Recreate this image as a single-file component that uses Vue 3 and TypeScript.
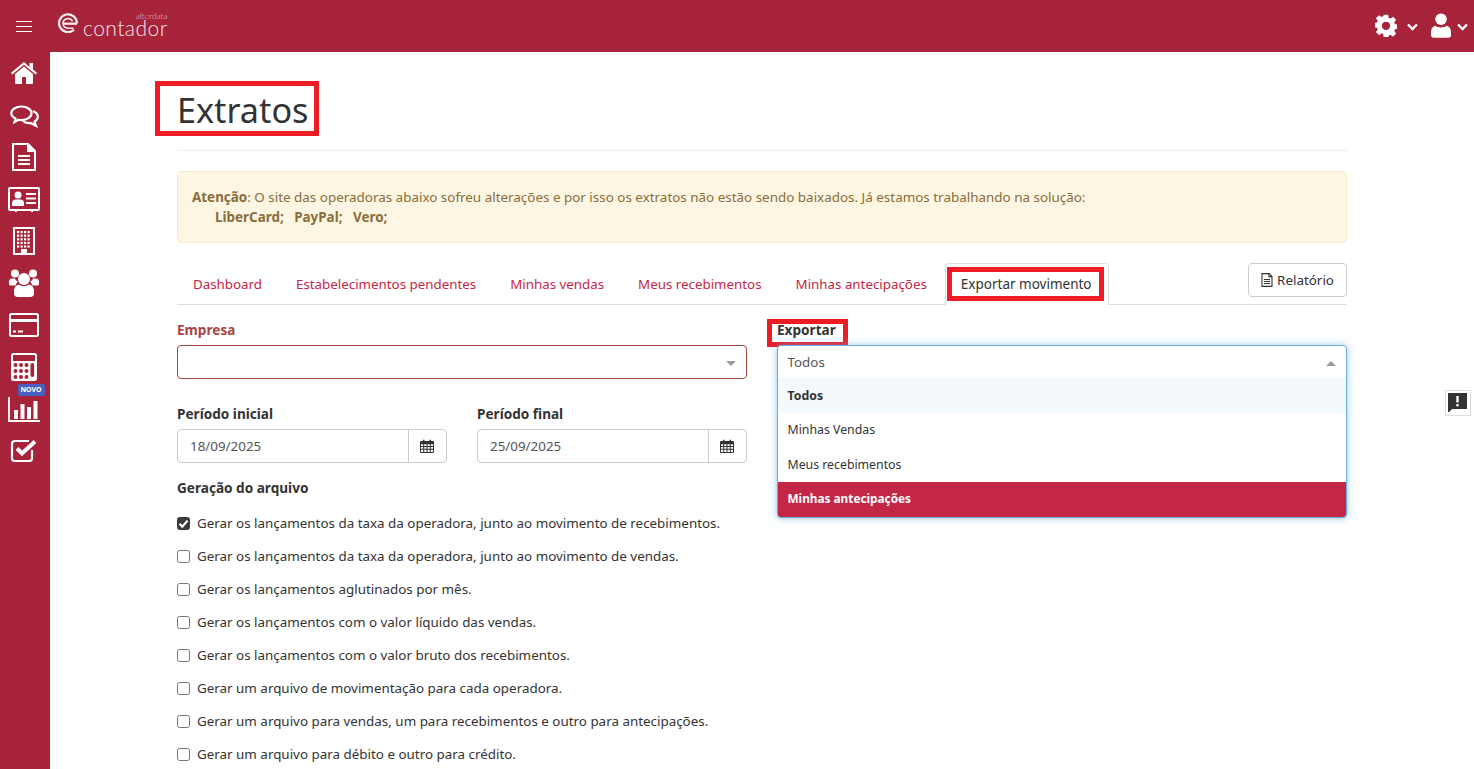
<script setup lang="ts">
const tabs: string[] = ['Dashboard', 'Estabelecimentos pendentes', 'Minhas vendas', 'Meus recebimentos', 'Minhas antecipações']
const options: { text: string; cls: string }[] = [
  { text: 'Todos', cls: 'hover' },
  { text: 'Minhas Vendas', cls: '' },
  { text: 'Meus recebimentos', cls: '' },
  { text: 'Minhas antecipações', cls: 'selected' },
]
const checks: { text: string; on: boolean }[] = [
  { text: 'Gerar os lançamentos da taxa da operadora, junto ao movimento de recebimentos.', on: true },
  { text: 'Gerar os lançamentos da taxa da operadora, junto ao movimento de vendas.', on: false },
  { text: 'Gerar os lançamentos aglutinados por mês.', on: false },
  { text: 'Gerar os lançamentos com o valor líquido das vendas.', on: false },
  { text: 'Gerar os lançamentos com o valor bruto dos recebimentos.', on: false },
  { text: 'Gerar um arquivo de movimentação para cada operadora.', on: false },
  { text: 'Gerar um arquivo para vendas, um para recebimentos e outro para antecipações.', on: false },
  { text: 'Gerar um arquivo para débito e outro para crédito.', on: false },
]
const dates: { label: string; value: string }[] = [
  { label: 'Período inicial', value: '18/09/2025' },
  { label: 'Período final', value: '25/09/2025' },
]
</script>

<template>
  <div class="app">
    <header class="topbar">
      <div class="burger"><i></i><i></i><i></i></div>
      <div class="logo">
        <svg width="20" height="20" viewBox="0 0 20 20" fill="none" stroke="#fbeef0" stroke-width="2.200">
          <path d="M18.900 10.500A8.900 8.900 0 1 0 16 16.800" />
          <path d="M5 10.700h13.900" />
          <path d="M5 10.700a5 5 0 0 1 9.500-2.200" stroke-width="1.600" />
          <path d="M5 10.700a5 5 0 0 0 5 4.500h5.500" stroke-width="1.600" />
        </svg>
        <span class="logo-word">contador<small>alterdata</small></span>
      </div>
      <div class="top-actions">
        <svg class="gear" width="22" height="23" viewBox="0 0 24 24" fill="#fff">
          <path fill-rule="evenodd" d="M9.600 0h4.800l.6 3.400 1.800.7 2.800-2 3.400 3.400-2 2.800.8 1.800 3.200.6v4.600l-3.200.6-.8 1.800 2 2.800-3.400 3.400-2.800-2-1.800.7-.6 3.400H9.600L9 20.900l-1.800-.7-2.800 2L1 18.800l2-2.800-.8-1.800L-1 13.600V9l3.200-.6.8-1.800-2-2.800 3.400-3.400 2.800 2L9 1.700zM12 7.500a4.500 4.500 0 1 0 0 9 4.500 4.500 0 0 0 0-9z" transform="translate(0 .3)" />
        </svg>
        <svg class="chev" width="11" height="8" viewBox="0 0 11 8" fill="none" stroke="#fff" stroke-width="2.400"><path d="M1 1.500l4.500 4.500L10 1.500" /></svg>
        <svg class="user" width="20" height="25" viewBox="0 0 20 25" fill="#fff">
          <circle cx="10" cy="6.200" r="5.800" /><path d="M4 12.800c1.800 1.200 3.800 1.700 6 1.700s4.200-.5 6-1.700c2.500.8 4 3.200 4 6.200v3.300c0 1.500-1 2.500-2.500 2.500h-15C1 24.800 0 23.800 0 22.300V19c0-3 1.500-5.400 4-6.200z" />
        </svg>
        <svg class="chev last" width="11" height="8" viewBox="0 0 11 8" fill="none" stroke="#fff" stroke-width="2.400"><path d="M1 1.500l4.500 4.500L10 1.500" /></svg>
      </div>
    </header>

    <div class="body">
      <aside class="sidebar">
        <svg width="26" height="22" viewBox="0 0 26 22" fill="#fff">
          <path d="M13 4.500L4 12v9a1 1 0 0 0 1 1h6v-7h4v7h6a1 1 0 0 0 1-1v-9z" /><path d="M13 0L0 10.800l1.300 1.600L13 2.700l11.700 9.700 1.300-1.600-4-3.300V1h-3.500v3.900z" />
        </svg>
        <svg width="29" height="23" viewBox="0 0 29 23" fill="none" stroke="#fff" stroke-width="2.200">
          <path d="M11.500 1.500c5.500 0 10 3 10 6.800s-4.500 6.800-10 6.800c-1 0-1.800 0-2.800-.3L4.500 17l1-3.500C3 12.300 1.300 10.500 1.300 8.300c0-3.800 4.600-6.800 10.200-6.800z" />
          <path d="M23 6c3 1.200 4.800 3.500 4.800 5.800 0 2-1.400 3.800-3.300 5l1.500 4-5.500-2.800c-3 .3-5.500-.5-7.500-2" />
        </svg>
        <svg width="24" height="28" viewBox="0 0 24 28" fill="none" stroke="#fff" stroke-width="2">
          <path d="M1 1h15l7 7v19H1z" /><path d="M16 1v7h7" fill="#fff" /><path d="M6 13h12M6 17h12M6 21h12" />
        </svg>
        <svg width="32" height="25" viewBox="0 0 32 25">
          <rect x="1" y="1" width="30" height="22" fill="none" stroke="#fff" stroke-width="2" rx="1" />
          <circle cx="10" cy="8" r="3.500" fill="#fff" /><path d="M4 19v-3c0-2.500 2-3.500 3.500-3.500h5c1.500 0 3.500 1 3.500 3.500v3z" fill="#fff" />
          <path d="M18 7h10M18 11.500h10M18 16h10" stroke="#fff" stroke-width="2" />
          <path d="M8 23v2M24 23v2" stroke="#fff" stroke-width="2" />
        </svg>
        <svg width="22" height="28" viewBox="0 0 22 28">
          <rect x="1" y="1" width="20" height="26" fill="none" stroke="#fff" stroke-width="2" />
          <g fill="#fff">
            <rect v-for="c in 20" :key="c" :x="4 + ((c - 1) % 4) * 3.500" :y="4 + Math.floor((c - 1) / 4) * 3.600" width="2.200" height="2.200" />
            <rect x="8" y="22" width="6" height="5" />
          </g>
        </svg>
        <svg width="30" height="28" viewBox="0 0 30 28" fill="#fff">
          <circle cx="6" cy="4.500" r="4" /><circle cx="24" cy="4.500" r="4" /><circle cx="15" cy="10" r="6" />
          <path d="M3 9.500c-2 0-3 1.500-3 3.500v2c0 1 .8 1.500 1.800 1.500H6.500C7 14.500 8 13.500 9 12.500 7.500 12 6 10.500 6 9.500zM27 9.500c2 0 3 1.500 3 3.500v2c0 1-.8 1.500-1.800 1.500H23.500C23 14.500 22 13.500 21 12.500c1.500-.5 3-2 3-3zM10 15.500c3 2 7 2 10 0 3 .5 5 3 5 6v3c0 2-1.500 3.500-3.500 3.500h-13C6.500 28 5 26.500 5 24.500v-3c0-3 2-5.500 5-6z" />
        </svg>
        <svg width="30" height="24" viewBox="0 0 30 24">
          <rect x="1" y="1" width="28" height="22" rx="1.500" fill="none" stroke="#fff" stroke-width="2" />
          <rect x="1" y="6" width="28" height="3" fill="#fff" /><path d="M4 18.500h3M9 18.500h5" stroke="#fff" stroke-width="2" />
        </svg>
        <svg width="26" height="28" viewBox="0 0 26 28">
          <rect x="1" y="1" width="24" height="26" rx="1.500" fill="none" stroke="#fff" stroke-width="2" />
          <rect x="1" y="8" width="24" height="19" fill="#fff" />
          <g fill="#a6233a">
            <template v-for="r in 3" :key="r"><circle v-for="c in 3" :key="c" :cx="4.500 + (c - 1) * 5.500" :cy="12 + (r - 1) * 6" r="2" /></template>
            <rect x="19.500" y="10" width="3.600" height="14" rx="1.800" />
          </g>
        </svg>
        <div class="chart">
          <span class="novo">NOVO</span>
          <svg width="32" height="25" viewBox="0 0 32 25" fill="#fff">
            <path d="M1 0v24h31" fill="none" stroke="#fff" stroke-width="1.800" />
            <rect x="6" y="13" width="4" height="9" /><rect x="12.500" y="7" width="4" height="15" />
            <rect x="19" y="10" width="4" height="12" /><rect x="25.500" y="4" width="4" height="18" />
          </svg>
        </div>
        <svg width="28" height="24" viewBox="0 0 28 24" fill="none" stroke="#fff" stroke-width="2.200">
          <path d="M22 12v8a3 3 0 0 1-3 3H5a3 3 0 0 1-3-3V6a3 3 0 0 1 3-3h14" />
          <path d="M7 10.500l5 5L25 3.500" stroke-width="4" />
        </svg>
      </aside>

      <main class="main">
        <div class="container">
          <div class="page-head">
            <h1 class="title">Extratos<span class="mark mark-title"></span></h1>
          </div>

          <div class="alert">
            <div><b>Atenção</b>: O site das operadoras abaixo sofreu alterações e por isso os extratos não estão sendo baixados. Já estamos trabalhando na solução:</div>
            <div class="alert-list"><b>LiberCard;</b><b>PayPal;</b><b>Vero;</b></div>
          </div>

          <div class="tabs-row">
            <nav class="tabs">
              <a v-for="t in tabs" :key="t" class="tab">{{ t }}</a>
              <a class="tab active">Exportar movimento<span class="mark mark-tab"></span></a>
            </nav>
            <button class="report">
              <svg width="12" height="14" viewBox="0 0 12 14" fill="none" stroke="#333" stroke-width="1.100">
                <path d="M1 .6h7l3 3v9.800H1z" /><path d="M8 .6v3h3M3 6.500h6M3 8.500h6M3 10.500h6" />
              </svg>
              Relatório
            </button>
          </div>

          <div class="columns">
            <section class="col">
              <label class="label error">Empresa</label>
              <div class="select invalid"><span class="caret"></span></div>

              <div class="dates">
                <div v-for="d in dates" :key="d.label" class="date">
                  <label class="label">{{ d.label }}</label>
                  <div class="input-group">
                    <span class="input-value">{{ d.value }}</span>
                    <span class="addon">
                      <svg width="14" height="14" viewBox="0 0 14 14" fill="#333">
                        <path fill-rule="evenodd" d="M1 2h2V.8h1.500V2h5V.8H11V2h2a1 1 0 0 1 1 1v10a1 1 0 0 1-1 1H1a1 1 0 0 1-1-1V3a1 1 0 0 1 1-1zM1 5.200v1.800h2.200V5.200zm3.200 0v1.800h2.300V5.200zm3.300 0v1.800h2.300V5.200zm3.300 0v1.800H13V5.200zM1 8v1.800h2.200V8zm3.200 0v1.800h2.300V8zm3.300 0v1.800h2.300V8zm3.300 0v1.800H13V8zM1 10.800V13h2.200v-2.200zm3.200 0V13h2.300v-2.200zm3.300 0V13h2.300v-2.200zm3.300 0V13H13v-2.200z" />
                      </svg>
                    </span>
                  </div>
                </div>
              </div>

              <label class="label gen">Geração do arquivo</label>
              <div class="checks">
                <div v-for="c in checks" :key="c.text" class="check">
                  <span class="box" :class="{ on: c.on }">
                    <svg v-if="c.on" width="13" height="13" viewBox="0 0 13 13" fill="none" stroke="#fff" stroke-width="2.200"><path d="M2.500 6.800l2.800 2.800 5.200-6" /></svg>
                  </span>
                  <span class="check-text">{{ c.text }}</span>
                </div>
              </div>
            </section>

            <section class="col">
              <label class="label export-label">Exportar<span class="mark mark-export"></span></label>
              <div class="dropdown">
                <div class="dd-head">Todos<span class="caret up"></span></div>
                <div class="dd-options">
                  <div v-for="o in options" :key="o.text" class="dd-option" :class="o.cls">{{ o.text }}</div>
                </div>
              </div>
            </section>
          </div>
        </div>
      </main>
    </div>

    <div class="feedback">
      <svg width="20" height="20" viewBox="0 0 20 20">
        <path d="M1 1h19v16H5l-4 4z" fill="#333" /><rect x="9.300" y="4" width="2.400" height="6.500" fill="#fff" /><rect x="9.300" y="12" width="2.400" height="2.400" fill="#fff" />
      </svg>
    </div>
  </div>
</template>

<style>
html, body { margin: 0; padding: 0; background: #fff; overflow: hidden; }
</style>

<style scoped>
.app {
  position: relative;
  width: 1474px;
  height: 769px;
  overflow: hidden;
  font-family: "Noto Sans", "Open Sans", sans-serif;
  font-size: 13.4px;
  line-height: 20px;
  color: #333;
}
.topbar {
  height: 52px;
  background: #a6233a;
  display: flex;
  align-items: center;
}
.burger { width: 50px; display: flex; flex-direction: column; align-items: center; gap: 4px; margin-left: -1px; }
.burger i { display: block; width: 16px; height: 1px; background: #fff; }
.logo { display: flex; align-items: flex-start; margin-left: 9px; height: 22px; margin-top: -4px; }
.logo-word {
  position: relative;
  margin-left: 5px;
  margin-top: 8px;
  font-family: Lato, sans-serif;
  font-weight: 300;
  font-size: 21px;
  line-height: 14px;
  letter-spacing: .45px;
  color: #f6e3e6;
}
.logo-word small {
  position: absolute;
  right: 0;
  top: -9px;
  font-size: 8.500px;
  line-height: 8px;
  letter-spacing: 0;
  color: #e8c3ca;
}
.top-actions { margin-left: auto; margin-top: -2px; display: flex; align-items: center; }
.chev { margin-left: 10px; margin-right: 13px; margin-top: 3px; }
.chev.last { margin-left: 6px; margin-right: 6px; }
.body { display: flex; height: 717px; }
.sidebar {
  width: 48px;
  padding-right: 2px;
  flex: none;
  background: #a6233a;
  display: flex;
  flex-direction: column;
  align-items: center;
}
.sidebar > svg, .chart { position: relative; flex: none; }
.sidebar > svg:nth-child(1) { margin-top: 10px; }
.sidebar > svg:nth-child(2) { margin-top: 21px; }
.sidebar > svg:nth-child(3) { margin-top: 15px; }
.sidebar > svg:nth-child(4) { margin-top: 16px; }
.sidebar > svg:nth-child(5) { margin-top: 15px; }
.sidebar > svg:nth-child(6) { margin-top: 14px; }
.sidebar > svg:nth-child(7) { margin-top: 16px; }
.sidebar > svg:nth-child(8) { margin-top: 16px; }
.chart { margin-top: 16px; height: 25px; display: block; }
.chart svg { display: block; margin-left: -1px; }
.sidebar > svg:nth-child(10) { margin-top: 16px; }
.novo {
  position: absolute;
  left: 9px;
  top: -13px;
  width: 27px;
  height: 12px;
  border-radius: 2px;
  background: #4a5fc1;
  color: #fff;
  font-size: 7px;
  font-weight: 700;
  line-height: 12px;
  text-align: center;
}
.main { flex: 1; padding-left: 127px; }
.container { width: 1170px; }
.page-head { height: 98px; border-bottom: 1px solid #eee; box-sizing: content-box; }
.title {
  position: relative;
  display: inline-block;
  margin: 32px 0 0;
  font-size: 34.200px;
  line-height: 52px;
  font-weight: 400;
  color: #333;
}
.mark { position: absolute; border: 5px solid #ed1c24; box-sizing: border-box; pointer-events: none; }
.mark-title { left: -22px; top: -3px; width: 164px; height: 55px; }
.mark-tab { left: 1px; top: 3px; width: 157px; height: 34px; }
.mark-export { left: -10px; top: -1px; width: 81px; height: 28px; }
.alert {
  margin-top: 20px;
  height: 72px;
  box-sizing: border-box;
  padding: 15px 14px;
  background: #fcf6e3;
  border: 1px solid #faebcc;
  border-radius: 4px;
  color: #8a6d3b;
  font-size: 13.430px;
  line-height: 20px;
}
.alert-list { display: flex; gap: 10.500px; padding-left: 23px; }
.tabs-row {
  margin-top: 20px;
  height: 41px;
  display: flex;
  justify-content: space-between;
  align-items: flex-start;
  border-bottom: 1px solid #ddd;
}
.tabs { display: flex; height: 41px; }
.tab {
  position: relative;
  display: block;
  padding: 10px 15px 0;
  margin-right: 2px;
  height: 41px;
  box-sizing: border-box;
  color: #c42645;
  font-size: 13.335px;
  border: 1px solid transparent;
  border-bottom: 0;
  white-space: nowrap;
}
.tab.active {
  height: 42px;
  padding-right: 16px;
  color: #333;
  background: #fff;
  border-color: #ddd;
  border-radius: 4px 4px 0 0;
  margin-right: 0;
  font-size: 13.500px;
}
.report {
  width: 99px;
  height: 34px;
  background: #fff;
  border: 1px solid #ccc;
  border-radius: 4px;
  font: inherit;
  color: #333;
  padding: 0;
  display: flex;
  align-items: center;
  justify-content: center;
  gap: 4px;
}
.columns { display: flex; gap: 30px; margin-top: 15px; }
.col { width: 570px; flex: none; }
.label { display: block; font-size: 13.600px; font-weight: 700; line-height: 20px; margin-bottom: 5px; position: relative; }
.label.error { color: #a94442; }
.export-label { display: inline-block; vertical-align: top; }
.select {
  position: relative;
  height: 34px;
  box-sizing: border-box;
  border: 1px solid #a94442;
  border-radius: 4px;
}
.caret {
  position: absolute;
  right: 10px;
  top: 15px;
  width: 0;
  height: 0;
  border-left: 5px solid transparent;
  border-right: 5px solid transparent;
  border-top: 5px solid #999;
}
.caret.up { border-top: 0; border-bottom: 5px solid #999; }
.dates { display: flex; gap: 30px; margin-top: 25px; }
.date { width: 270px; }
.input-group {
  display: flex;
  height: 34px;
  box-sizing: border-box;
  border: 1px solid #ccc;
  border-radius: 4px;
}
.input-value { flex: 1; padding: 6px 12px; color: #555; }
.addon {
  width: 36px;
  padding-right: 1px;
  border-left: 1px solid #ccc;
  display: flex;
  align-items: center;
  justify-content: center;
}
.gen { margin-top: 15px; margin-bottom: 0; }
.checks { margin-top: 9px; }
.check { display: flex; align-items: center; height: 33px; gap: 7px; white-space: nowrap; }
.check-text { position: relative; top: -1px; }
.box {
  width: 13px;
  height: 13px;
  box-sizing: border-box;
  border: 1px solid #767676;
  border-radius: 2.500px;
  background: #fff;
  flex: none;
  display: flex;
  align-items: center;
  justify-content: center;
}
.box.on { background: #3b3b3b; border-color: #3b3b3b; }
.box.on svg { flex: none; }
.dropdown {
  position: relative;
  height: 173px;
  box-sizing: border-box;
  border: 1px solid #66afe9;
  border-radius: 4px;
  box-shadow: 0 1px 3px rgba(0, 0, 0, .08), 0 0 8px rgba(102, 175, 233, .6);
  background: #fff;
  overflow: hidden;
}
.dd-head { position: relative; height: 32px; padding: 6px 10px 6px 9.500px; box-sizing: border-box; color: #555; }
.dd-option { height: 34.500px; line-height: 34.500px; padding: 0 9.500px; font-size: 12.300px; }
.dd-option.hover { background: #f4f9fd; font-weight: 700; height: 35px; line-height: 35px; }
.dd-option.selected { background: #c42645; color: #fff; font-weight: 700; font-size: 11.800px; line-height: 33px; }
.feedback {
  position: absolute;
  left: 1445px;
  top: 390px;
  width: 26px;
  height: 26px;
  box-sizing: border-box;
  border: 1px solid #ddd;
  background: #fff;
  display: flex;
  align-items: center;
  justify-content: center;
}
.feedback svg { margin: 0 2px 2px 0; }
</style>
